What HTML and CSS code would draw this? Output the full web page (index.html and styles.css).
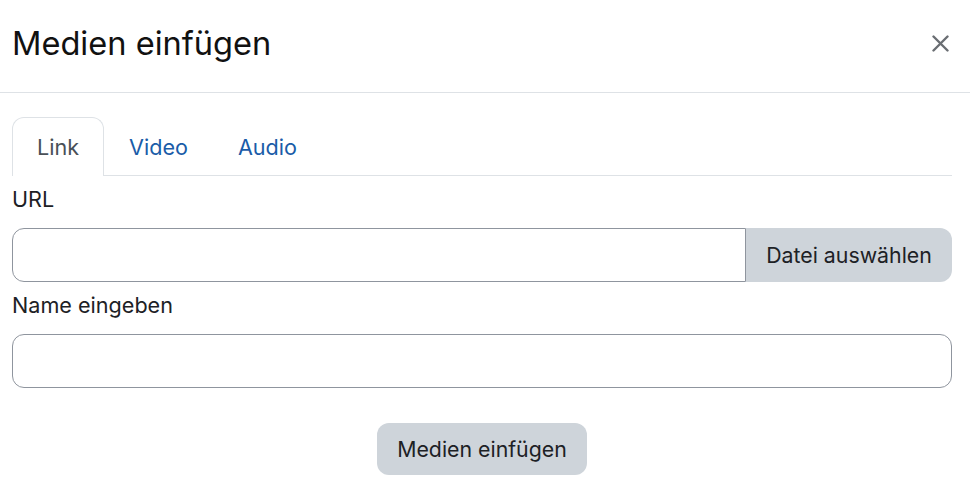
FILE: index.html
```html
<!DOCTYPE html>
<html lang="de">
<head>
<meta charset="utf-8">
<title>Medien einfügen</title>
<link rel="stylesheet" href="styles.css">
</head>
<body>
<div class="modal">
  <header class="modal-header">
    <h1 class="modal-title">Medien einfügen</h1>
    <button class="close" aria-label="Schließen">
      <svg width="17" height="17" viewBox="0 0 17 17"><path d="M1.5 1.5 L15.5 15.5 M15.5 1.5 L1.5 15.5" stroke="#6a6e73" stroke-width="2.4" stroke-linecap="round" fill="none"/></svg>
    </button>
  </header>
  <div class="modal-body">
    <ul class="tabs">
      <li class="tab active">Link</li>
      <li class="tab">Video</li>
      <li class="tab">Audio</li>
    </ul>
    <div class="form-group">
      <label class="label">URL</label>
      <div class="input-group">
        <div class="input input-left"></div>
        <button class="btn btn-append">Datei auswählen</button>
      </div>
    </div>
    <div class="form-group">
      <label class="label">Name eingeben</label>
      <div class="input"></div>
    </div>
    <div class="footer">
      <button class="btn btn-submit">Medien einfügen</button>
    </div>
  </div>
</div>
</body>
</html>
```

FILE: styles.css
```css
* { box-sizing: border-box; }
html, body { margin: 0; padding: 0; background: #fff; }
body {
  font-family: Inter, "Noto Sans", "Liberation Sans", sans-serif;
  color: #1d2125;
  width: 970px;
  height: 492px;
  overflow: hidden;
}
.modal-header {
  height: 93px;
  border-bottom: 1px solid #dee2e6;
  display: flex;
  align-items: center;
  justify-content: space-between;
  padding: 0 21px 0 12px;
}
.modal-title {
  margin: 0;
  font-size: 32.6px;
  font-weight: 400;
  color: #111;
  line-height: 1.2;
  padding-bottom: 5px;
}
.close {
  border: 0;
  background: none;
  padding: 0;
  width: 17px;
  height: 17px;
  display: flex;
  margin-bottom: 6px;
}
.modal-body {
  padding: 24px 18px 0 12px;
}
.tabs {
  list-style: none;
  margin: 0;
  padding: 0;
  display: flex;
  border-bottom: 1px solid #dee2e6;
  height: 59px;
}
.tab {
  padding: 0 24px;
  border: 1px solid transparent;
  border-bottom: 0;
  border-radius: 12px 12px 0 0;
  font-size: 21.6px;
  color: #1a5ca8;
  display: flex;
  align-items: center;
  height: 59px;
}
.tab.active {
  color: #495057;
  border-color: #dee2e6;
  background: #fff;
  height: 59px;
  margin-bottom: -1px;
}
.form-group {
  display: flex;
  flex-direction: column;
  padding-top: 6px;
}
.label {
  font-size: 21.6px;
  line-height: 34px;
  margin-bottom: 12px;
}
.input-group {
  display: flex;
  height: 54px;
}
.input {
  height: 54px;
  border: 1px solid #8f959e;
  border-radius: 12px;
  background: #fff;
}
.input-left {
  flex: 1;
  border-radius: 12px 0 0 12px;
}
.btn {
  font-family: inherit;
  font-size: 21.3px;
  color: #1d2125;
  background: #ced4da;
  border: 0;
  padding: 0 20px;
}
.btn-append {
  border-radius: 0 12px 12px 0;
  width: 206px;
  height: 54px;
}
.footer {
  display: flex;
  justify-content: center;
  padding-top: 35px;
}
.btn-submit {
  width: 210px;
  height: 52px;
  border-radius: 12px;
}
```
